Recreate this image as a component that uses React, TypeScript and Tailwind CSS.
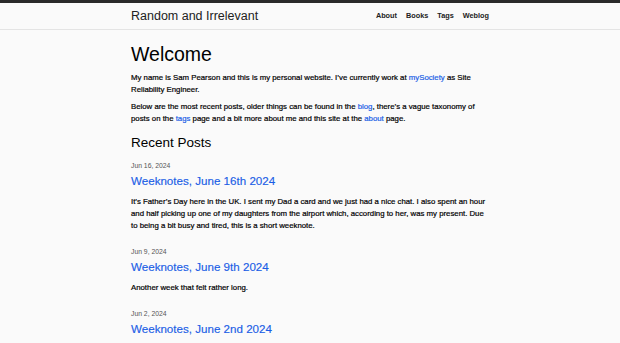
const posts = [
  {
    date: 'Jun 16, 2024',
    title: 'Weeknotes, June 16th 2024',
    summary:
      "It’s Father’s Day here in the UK. I sent my Dad a card and we just had a nice chat. I also spent an hour and half picking up one of my daughters from the airport which, according to her, was my present. Due to being a bit busy and tired, this is a short weeknote.",
  },
  { date: 'Jun 9, 2024', title: 'Weeknotes, June 9th 2024', summary: 'Another week that felt rather long.' },
  { date: 'Jun 2, 2024', title: 'Weeknotes, June 2nd 2024', summary: '' },
]

const link = 'text-[#1a5ee6]'
const body = 'text-[7.8px] leading-[12px] text-black [-webkit-text-stroke:0.2px_currentColor]'

export default function App() {
  return (
    <div className="min-h-[343px] bg-[#fafafa] font-['Liberation_Sans',Arial,sans-serif] text-[#111]">
      <div className="h-[3px] bg-[#2a2a2a]" />
      <header className="h-[27px] border-b border-[#e4e4e4]">
        <div className="mx-auto flex h-full w-[358px] items-center justify-between">
          <span className="text-[12.5px] text-[#222]">Random and Irrelevant</span>
          <nav className="flex gap-[9px] text-[7.3px] font-bold text-[#222]">
            <a>About</a>
            <a>Books</a>
            <a>Tags</a>
            <a>Weblog</a>
          </nav>
        </div>
      </header>

      <main className="mx-auto w-[358px] pt-[12px]">
        <h1 className="text-[19.5px] leading-[24px] text-black">Welcome</h1>
        <p className={`mt-[6px] ${body}`}>
          My name is Sam Pearson and this is my personal website. I’ve currently work at{' '}
          <a className={link}>mySociety</a> as Site Reliability Engineer.
        </p>
        <p className={`mt-[5px] ${body}`}>
          Below are the most recent posts, older things can be found in the <a className={link}>blog</a>, there’s a vague
          taxonomy of posts on the <a className={link}>tags</a> page and a bit more about me and this site at the{' '}
          <a className={link}>about</a> page.
        </p>

        <h2 className="mt-[9px] text-[13.5px] leading-[18px] text-black">Recent Posts</h2>

        <div className="mt-[9px] flex flex-col gap-[15px]">
          {posts.map((p) => (
            <article key={p.title}>
              <div className="text-[6.8px] leading-[10px] text-[#555]">{p.date}</div>
              <h3 className={`mt-[2px] text-[11.6px] leading-[16px] [-webkit-text-stroke:0.15px_currentColor] ${link}`}>
                {p.title}
              </h3>
              {p.summary && <p className={`mt-[7px] ${body}`}>{p.summary}</p>}
            </article>
          ))}
        </div>
      </main>
    </div>
  )
}
